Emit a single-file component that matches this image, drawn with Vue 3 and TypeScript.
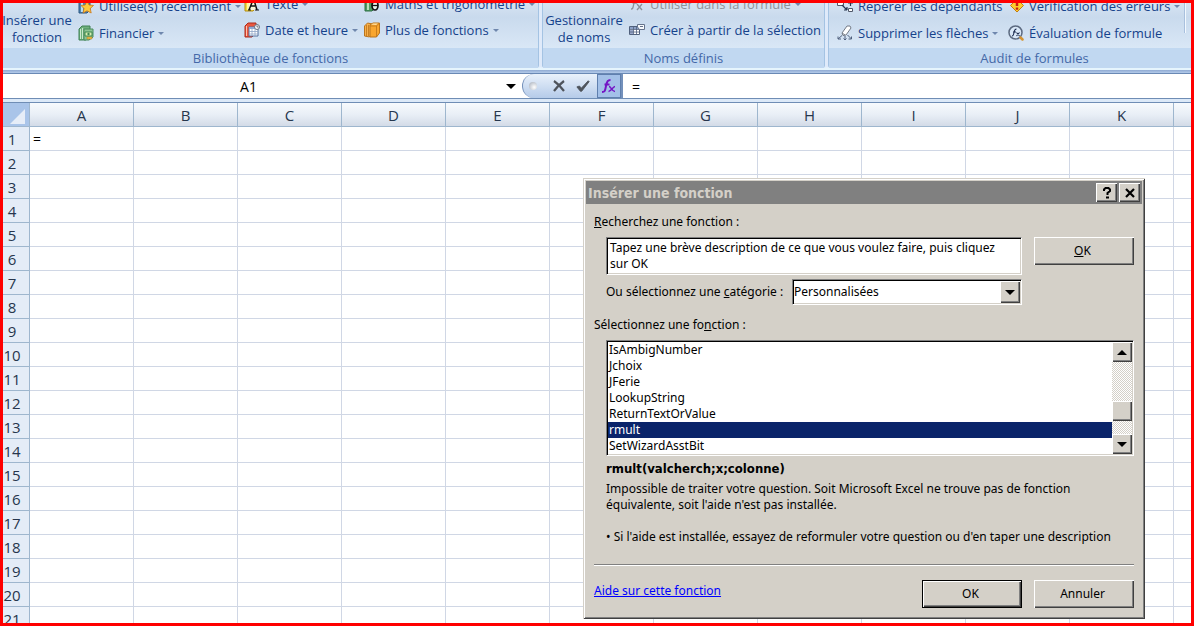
<script setup lang="ts">
import { ref } from 'vue'

interface Command {
  label: string
  icon: string
  menu?: boolean
  disabled?: boolean
}

const library: Command[][] = [
  [
    { label: 'Utilisée(s) récemment', icon: 'recent', menu: true },
    { label: 'Financier', icon: 'finance', menu: true },
  ],
  [
    { label: 'Texte', icon: 'text', menu: true },
    { label: 'Date et heure', icon: 'date', menu: true },
  ],
  [
    { label: 'Maths et trigonométrie', icon: 'maths', menu: true },
    { label: 'Plus de fonctions', icon: 'more', menu: true },
  ],
]
const names: Command[] = [
  { label: 'Utiliser dans la formule', icon: 'use', menu: true, disabled: true },
  { label: 'Créer à partir de la sélection', icon: 'create' },
]
const audit: Command[][] = [
  [
    { label: 'Repérer les dépendants', icon: 'trace' },
    { label: 'Supprimer les flèches', icon: 'erase', menu: true },
  ],
  [
    { label: 'Vérification des erreurs', icon: 'check', menu: true },
    { label: 'Évaluation de formule', icon: 'evaluate' },
  ],
]

const columns = ['A', 'B', 'C', 'D', 'E', 'F', 'G', 'H', 'I', 'J', 'K', '']
const rows = Array.from({ length: 21 }, (_, i) => i + 1)

const cellName = ref('A1')
const formula = ref('=')
const search = ref('Tapez une brève description de ce que vous voulez faire, puis cliquez sur OK')
const category = ref('Personnalisées')
const functions = ['IsAmbigNumber', 'Jchoix', 'JFerie', 'LookupString', 'ReturnTextOrValue', 'rmult', 'SetWizardAsstBit']
const selected = ref('rmult')
</script>

<template>
  <svg class="defs" aria-hidden="true">
    <defs>
      <symbol id="recent" viewBox="0 0 16 16">
        <path d="M1 3l3-2h8v11l-3 3H1z" fill="#4f86b8" stroke="#29557f" />
        <path d="M3 4h2v10H3z" fill="#b9dcf2" />
        <path d="M9 3l2 4 4.500.5-3.300 3 1 4.500L9 12.800 5 15l1-4.500-3-3L7.200 7z" fill="#ffc83c" stroke="#c9761a" stroke-width=".8" />
      </symbol>
      <symbol id="finance" viewBox="0 0 16 16">
        <path d="M1 4l3-3h8v10l-4 4H1z" fill="#6fb07d" stroke="#3f8055" />
        <path d="M2.500 4v10M4.500 3v11" stroke="#c9e8cc" />
        <path d="M6 4h9v8l-4 3H6z" fill="#8cc593" stroke="#4b8c5e" />
        <path d="M7 7h7v4H7z" fill="#d6efb1" stroke="#3c8550" />
        <circle cx="10.500" cy="9" r="1.200" fill="#3c8550" />
        <path d="M9 12h5v2H9z" fill="#efc34d" stroke="#a87a1c" stroke-width=".5" />
      </symbol>
      <symbol id="text" viewBox="0 0 16 16">
        <path d="M1 3l3-2h8v11l-3 3H1z" fill="#f4da3e" stroke="#b38c12" />
        <path d="M3 4h2v10H3z" fill="#fff6a5" />
        <path d="M5 3h8v11H5z" fill="#fff" opacity=".8" />
        <path d="M5 14l4-10h1l3 10M7 10h4" fill="none" stroke="#111" stroke-width="1.500" />
        <path d="M4 14h3M11 14h4" stroke="#111" />
      </symbol>
      <symbol id="date" viewBox="0 0 16 16">
        <path d="M1 4l3-3h8v10l-4 4H1z" fill="#e9573e" stroke="#ab2b1b" />
        <path d="M2.500 4v10" stroke="#ffc2ac" />
        <path d="M5 5h9v9H5z" fill="#fff" stroke="#53719e" />
        <path d="M5 5h9v2H5z" fill="#8eaad4" />
        <path d="M5 9.500h9M5 12h9M8 7v7M11 7v7" stroke="#8fa5c6" stroke-width=".8" />
        <circle cx="13" cy="5" r="2.500" fill="#f4f6fa" stroke="#6c7684" />
        <path d="M13 3.500V5h1.500" stroke="#444" stroke-width=".7" fill="none" />
      </symbol>
      <symbol id="maths" viewBox="0 0 16 16">
        <path d="M1 3l3-2h7v11l-3 3H1z" fill="#4f9b62" stroke="#2c6e43" />
        <path d="M3 4h2v10H3z" fill="#b9e0bd" />
        <ellipse cx="11" cy="9.500" rx="3" ry="4.500" fill="#e8f0ea" stroke="#111" stroke-width="1.700" />
        <path d="M8 9.500h6" stroke="#111" stroke-width="1.300" />
      </symbol>
      <symbol id="more" viewBox="0 0 16 16">
        <path d="M0.500 4l3-3 5 1v9l-3 4-5-1z" fill="#f8b04a" stroke="#b9741c" />
        <path d="M6 3l3-2h6.500v10l-3 4H6z" fill="#f9a62e" stroke="#b9741c" />
        <path d="M6 4h6.500V15M12.500 4l3-3M2.500 3v11M4.500 3v11" stroke="#bd7419" fill="none" stroke-width=".8" />
        <path d="M7 2.500l2-1h5l-2 1.500z" fill="#ffe0a0" />
      </symbol>
      <symbol id="use" viewBox="0 0 16 16">
        <path d="M2 13c2 0 2-1 3-6s1.500-5 3.500-5M3.500 7H8M8 8l5 6M13 8l-5 6" fill="none" stroke="#8c929c" stroke-width="1.300" />
        <path d="M9 5h6" stroke="#8c929c" />
      </symbol>
      <symbol id="create" viewBox="0 0 16 16">
        <path d="M.5 4.500h10v8H.5z" fill="#fff" stroke="#50617d" />
        <path d="M1 5h9v2H1z" fill="#8ba0c6" />
        <path d="M1 8h3v4H1z" fill="#99a8ca" />
        <path d="M0 7.500h11M0 10h11M4.500 4v9M7.500 4v9" stroke="#50617d" stroke-width=".8" />
        <path d="M8.500 2.500h7v5h-5l-2-2.500z" fill="#f8fafc" stroke="#65738c" />
        <path d="M11 4.500h3" stroke="#65738c" />
      </symbol>
      <symbol id="trace" viewBox="0 0 16 16">
        <path d="M.5 3.500h6v4h-6z" fill="#fff" stroke="#50586a" />
        <path d="M5 7l5 5M10 12v-3M10 12H7M13.500 2v6M11 5h5" stroke="#27344e" stroke-width="1.200" fill="none" />
        <path d="M11.500 10.500h4v3h-4z" fill="#fff" stroke="#50586a" />
      </symbol>
      <symbol id="erase" viewBox="0 0 16 16">
        <path d="M5 8l5-7h3l1 2-5 7-3 .5z" fill="#fff" stroke="#747b87" />
        <path d="M5 8l3 2" stroke="#747b87" />
        <path d="M5 10.500l-4 3.500M1 11.500V14h3M8 11v4M6.500 13.500L8 15l1.500-1.500M10.500 10l4 4M14.500 11.500V14h-3" fill="none" stroke="#4e5f7c" />
      </symbol>
      <symbol id="check" viewBox="0 0 16 16">
        <path d="M1 3h6" stroke="#4969b0" stroke-width="3" />
        <path d="M9 1l6.500 6.500L9 14 2.500 7.500z" fill="#ffcb2d" stroke="#c27b12" />
        <path d="M9 3v5" stroke="#c41f12" stroke-width="2.500" />
        <path d="M9 9.500v2.200" stroke="#c41f12" stroke-width="2.500" />
      </symbol>
      <symbol id="evaluate" viewBox="0 0 16 16">
        <circle cx="7.500" cy="7.500" r="6.500" fill="#d9e8f8" stroke="#5c6a80" stroke-width="1.500" />
        <path d="M4 11c1.500 0 1.600-1 2-3.500S7 4 8.500 4M5 7h3M8.500 7.500l3 3.500M11.500 7.500l-3 3.500" fill="none" stroke="#1c2b4e" stroke-width="1.100" />
        <path d="M12.500 12.500l2 2" stroke="#d49434" stroke-width="2.500" stroke-linecap="round" />
      </symbol>
    </defs>
  </svg>

  <div class="window">
    <section class="ribbon" aria-label="Formules">
      <div class="group library">
        <div class="body">
          <button class="big">Insérer une<br />fonction</button>
          <div v-for="(stack, i) in library" :key="i" class="stack" :class="'lib' + i">
            <button v-for="c in stack" :key="c.label" class="cmd">
              <svg class="icon"><use :href="'#' + c.icon" /></svg>{{ c.label }}<i v-if="c.menu" class="caret"></i>
            </button>
          </div>
        </div>
        <div class="caption">Bibliothèque de fonctions</div>
      </div>
      <div class="group names">
        <div class="body">
          <button class="big">Gestionnaire<br />de noms</button>
          <div class="stack">
            <button v-for="c in names" :key="c.label" class="cmd" :disabled="c.disabled">
              <svg class="icon"><use :href="'#' + c.icon" /></svg>{{ c.label }}<i v-if="c.menu" class="caret"></i>
            </button>
          </div>
        </div>
        <div class="caption">Noms définis</div>
      </div>
      <div class="group audit">
        <div class="body">
          <div v-for="(stack, i) in audit" :key="i" class="stack low" :class="'aud' + i">
            <button v-for="c in stack" :key="c.label" class="cmd">
              <svg class="icon"><use :href="'#' + c.icon" /></svg>{{ c.label }}<i v-if="c.menu" class="caret"></i>
            </button>
          </div>
          <div class="divider"></div>
        </div>
        <div class="caption">Audit de formules</div>
      </div>
    </section>

    <div class="formula-bar">
      <input v-model="cellName" class="name-box" aria-label="Zone Nom" />
      <button class="name-drop" aria-label="Liste des noms"><i class="arrow down"></i></button>
      <div class="tools">
        <i class="knob"></i>
        <button class="tool" aria-label="Annuler la saisie">
          <svg viewBox="0 0 14 14"><path d="M2 2c3 2 7 6 10 10M12 2C8 5 5 8 2 12" fill="none" stroke="#4e535b" stroke-width="2.200" /></svg>
        </button>
        <button class="tool" aria-label="Entrer">
          <svg viewBox="0 0 16 14"><path d="M1 8l3-1 2 2.500L14 1l1 1L6.500 13H5z" fill="#4e535b" stroke="#4e535b" /></svg>
        </button>
        <button class="tool fx" aria-label="Insérer une fonction">
          <svg viewBox="0 0 16 16">
            <path d="M1 14c3 0 3-1 4-6s2-6 4.500-6M3.500 6.500H8.500" fill="none" stroke="#7415c4" stroke-width="2" />
            <path d="M8 8.500c2 0 3 5 6 5M14 8.500c-2 0-4 5-6.500 5" fill="none" stroke="#7415c4" stroke-width="1.500" />
          </svg>
        </button>
      </div>
      <input v-model="formula" class="formula" aria-label="Barre de formule" />
    </div>

    <div class="sheet">
      <table>
        <thead>
          <tr>
            <th class="corner"><svg viewBox="0 0 16 16"><path d="M16 0v16H0z" fill="#e6edf8" /></svg></th>
            <th v-for="(c, i) in columns" :key="i" scope="col">{{ c }}</th>
          </tr>
        </thead>
        <tbody>
          <tr v-for="r in rows" :key="r">
            <th scope="row">{{ r }}</th>
            <td v-for="(c, i) in columns" :key="i">{{ r === 1 && i === 0 ? formula : '' }}</td>
          </tr>
        </tbody>
      </table>
    </div>

    <div class="dialog" role="dialog" aria-labelledby="dialog-title">
      <header class="title-bar">
        <h1 id="dialog-title">Insérer une fonction</h1>
        <button class="btn chrome" aria-label="Aide">
          <svg viewBox="0 0 12 12"><path d="M3 4V2.500L4.500 1h3L9 2.500V4L6.500 6v2" fill="none" stroke="#000" stroke-width="2" /><path d="M5 9.500h3v2H5z" /></svg>
        </button>
        <button class="btn chrome" aria-label="Fermer">
          <svg viewBox="0 0 12 12"><path d="M2 2l8 8M10 2l-8 8" stroke="#000" stroke-width="2.200" /></svg>
        </button>
      </header>
      <div class="content">
        <label for="search"><u>R</u>echerchez une fonction :</label>
        <div class="search-row">
          <textarea id="search" v-model="search" class="sunken" rows="2"></textarea>
          <button class="btn"><span><u>O</u>K</span></button>
        </div>
        <div class="category-row">
          <label for="category">Ou sélectionnez une <u>c</u>atégorie :</label>
          <div class="combo sunken">
            <select id="category" v-model="category">
              <option>Personnalisées</option>
            </select>
            <span class="btn combo-arrow"><i class="arrow down"></i></span>
          </div>
        </div>
        <div id="list-label" class="list-label">Sélectionnez une fo<u>n</u>ction :</div>
        <div class="list sunken">
          <ul role="listbox" aria-labelledby="list-label" tabindex="0">
            <li
              v-for="f in functions"
              :key="f"
              role="option"
              :aria-selected="f === selected"
              :class="{ selected: f === selected }"
              @click="selected = f"
            >{{ f }}</li>
          </ul>
          <div class="scrollbar">
            <button class="btn" aria-label="Monter"><i class="arrow up"></i></button>
            <span class="track-before"></span>
            <span class="btn thumb"></span>
            <span class="track-after"></span>
            <button class="btn" aria-label="Descendre"><i class="arrow down"></i></button>
          </div>
        </div>
        <div class="description">
          <h2>rmult(valcherch;x;colonne)</h2>
          <p>Impossible de traiter votre question. Soit Microsoft Excel ne trouve pas de fonction équivalente, soit l'aide n'est pas installée.</p>
          <p class="hint">• Si l'aide est installée, essayez de reformuler votre question ou d'en taper une description</p>
        </div>
        <hr />
        <footer>
          <a href="#aide">Aide sur cette fonction</a>
          <button class="btn default">OK</button>
          <button class="btn">Annuler</button>
        </footer>
      </div>
    </div>
  </div>
</template>

<style>
html,
body {
  margin: 0;
  overflow: hidden;
}
</style>

<style scoped>
* {
  box-sizing: border-box;
}
button,
input,
textarea,
select {
  margin: 0;
  padding: 0;
  border: 0;
  border-radius: 0;
  background: none;
  font: inherit;
  color: inherit;
  outline: 0;
}
.defs {
  position: absolute;
  width: 0;
  height: 0;
}
.window {
  position: relative;
  display: flex;
  flex-direction: column;
  height: 100vh;
  border: 3px solid #f00;
  overflow: hidden;
  background: #fff;
  font-family: 'Open Sans', 'Noto Sans', sans-serif;
  font-size: 13px;
  color: #000;
}

/* Ribbon */
.ribbon {
  display: flex;
  flex: none;
  gap: 3px;
  height: 71px;
  padding-bottom: 6px;
  background: linear-gradient(#dfeafa 64px, #e6f5fd 65px, #e6f5fd 67px, #8faad3 67px, #b4cbea 70px, #6a89b5 70px);
  overflow: hidden;
  color: #15428b;
}
.group {
  display: flex;
  flex: none;
  flex-direction: column;
  border: 1px solid #a4c3e3;
  border-top: 0;
  border-radius: 0 0 3px 3px;
  background: linear-gradient(#d6e3f2, #c9daed 14px, #d9e7f6 45px);
}
.library {
  width: 536px;
  border-left: 0;
}
.names {
  width: 283px;
}
.audit {
  width: 413px;
}
.body {
  display: flex;
  align-items: flex-end;
  height: 45px;
}
.caption {
  flex: 1;
  background: #c1d8f1;
  color: #4468a8;
  line-height: 20px;
  text-align: center;
}
.big {
  flex: none;
  width: 68px;
  margin-bottom: 2px;
  line-height: 17px;
  white-space: nowrap;
  display: flex;
  justify-content: center;
}
.names .big {
  width: 82px;
}
.stack {
  display: flex;
  flex-direction: column;
  align-items: flex-start;
  justify-content: flex-end;
  gap: 2px;
  height: 45px;
  padding-bottom: 6px;
}
.lib0,
.low {
  gap: 3px;
  padding-bottom: 3px;
}
.lib0 {
  width: 166px;
  margin-left: 7px;
}
.lib1 {
  width: 120px;
}
.names .stack {
  margin-left: 4px;
}
.aud0 {
  width: 171px;
  margin-left: 8px;
}
.aud1 {
  width: 168px;
}
.cmd {
  display: flex;
  flex: none;
  align-items: center;
  height: 24px;
  white-space: nowrap;
}
.cmd:disabled {
  color: #8d9299;
}
.icon {
  width: 16px;
  height: 16px;
  margin-right: 5px;
}
.caret {
  margin-left: 4px;
  border: 3px solid transparent;
  border-top-color: #6f87ad;
  border-bottom: 0;
}
.divider {
  align-self: flex-start;
  width: 2px;
  height: 30px;
  margin-left: 8px;
  border-left: 1px solid #a9c0dd;
  background: #f2f8fe;
}

/* Formula bar */
.formula-bar {
  display: flex;
  flex: none;
  height: 29px;
  border-bottom: 1px solid #6f8db5;
  background: linear-gradient(#fff 24px, #6f8db5 24px, #6f8db5 25px, #dce9f8 25px);
}
.name-box {
  width: 491px;
  height: 24px;
  text-align: center;
  font-size: 14px;
}
.name-drop {
  width: 28px;
  height: 24px;
  padding-left: 5px;
  display: flex;
  align-items: center;
  justify-content: center;
}
.tools {
  display: flex;
  align-items: center;
  width: 100px;
  height: 24px;
  border: 1px solid #7390bb;
  border-width: 0 1px 0 1px;
  border-radius: 12px 0 0 12px;
  background: linear-gradient(#e9f1fb, #b5cbe9);
}
.knob {
  width: 8px;
  height: 8px;
  margin: 0 10px 0 6px;
  border-radius: 50%;
  background: radial-gradient(circle at 65% 65%, #fff, #a4acb9);
}
.tool {
  display: flex;
  align-items: center;
  justify-content: center;
  width: 24px;
  height: 24px;
}
.tool svg {
  width: 14px;
  height: 14px;
}
.tool.fx {
  margin-left: 2px;
  border: 1px solid #5f7fae;
  background: #a3c0e8;
}
.tool.fx svg {
  width: 16px;
  height: 16px;
}
.formula {
  flex: 1;
  min-width: 0;
  height: 24px;
  padding-left: 9px;
  border-left: 1px solid #7390bb;
  font-size: 14px;
}

/* Sheet */
.sheet {
  flex: 1;
  min-height: 0;
  overflow: hidden;
}
table {
  width: 1275px;
  table-layout: fixed;
  border-collapse: separate;
  border-spacing: 0;
  font-size: 15px;
}
th,
td {
  width: 104px;
  height: 24px;
  padding: 0;
  border: solid #d0d7e5;
  border-width: 0 1px 1px 0;
  font-weight: 400;
  line-height: 22px;
}
td {
  padding-left: 3px;
  font-size: 14px;
}
th {
  color: #27364d;
}
thead th {
  border-color: #9eb6ce;
  background: linear-gradient(#f7fafd, #e8eef6 12px, #d3dbe7);
}
tbody th,
.corner {
  width: 27px;
}
tbody th {
  padding-right: 8px;
  border-color: #9eb6ce;
  background: #e4ecf7;
}
thead .corner {
  background: #a9c4e9;
  text-align: right;
}
.corner svg {
  display: block;
  width: 15px;
  height: 15px;
  margin: 4px 4px 0 auto;
}

/* Dialog */
.dialog {
  position: absolute;
  top: 175px;
  left: 580px;
  width: 562px;
  padding: 3px;
  background: #d4d0c8;
  box-shadow: inset 1px 1px #d4d0c8, inset -1px -1px #404040, inset 2px 2px #fff, inset -2px -2px #808080;
  font-family: 'Noto Sans', 'DejaVu Sans Condensed', sans-serif;
  font-size: 12px;
  line-height: 16px;
}
.title-bar {
  display: flex;
  align-items: center;
  height: 23px;
  padding: 0 2px;
  background: #808080;
}
h1 {
  flex: 1;
  margin: 0;
  font-family: 'DejaVu Sans Condensed', 'DejaVu Sans', sans-serif;
  font-size: 14px;
  font-weight: 700;
  color: #d4d0c8;
}
.btn {
  display: flex;
  flex: none;
  align-items: center;
  justify-content: center;
  width: 100px;
  height: 28px;
  background: #d4d0c8;
  box-shadow: inset 1px 1px #fff, inset -1px -1px #404040, inset -2px -2px #808080;
}
.search-row .btn,
footer .btn {
  padding-right: 3px;
}
.btn.default {
  border: 1px solid #000;
}
.btn.chrome {
  width: 21px;
  height: 19px;
  margin-left: 2px;
}
.chrome svg {
  width: 12px;
  height: 12px;
}
.arrow {
  border: 5px solid transparent;
}
.arrow.down {
  border-top-color: #000;
  border-bottom: 0;
}
.arrow.up {
  border-bottom-color: #000;
  border-top: 0;
}
.sunken {
  padding: 1px;
  border: 1px solid;
  border-color: #808080 #fff #fff #808080;
  background: #fff;
  box-shadow: inset 1px 1px #000, inset -1px -1px #d4d0c8;
}
.content {
  padding: 10px 8px 8px;
}
.content > label {
  display: block;
}
.search-row {
  display: flex;
  gap: 12px;
  margin: 7px 0 4px 12px;
}
textarea.sunken {
  display: block;
  flex: 1;
  height: 38px;
  padding: 2px 12px 2px 3px;
  resize: none;
  overflow: hidden;
}
.category-row {
  display: flex;
  align-items: center;
  justify-content: space-between;
  margin: 0 112px 12px 12px;
}
.combo {
  display: flex;
  width: 230px;
  height: 26px;
}
select {
  flex: 1;
  appearance: none;
}
.combo-arrow {
  width: 20px;
  height: 22px;
  pointer-events: none;
}
.list {
  display: flex;
  margin: 7px 0 5px 12px;
}
ul {
  flex: 1;
  margin: 0;
  padding: 0;
  list-style: none;
  outline: 0;
}
li {
  height: 16px;
  padding-left: 1px;
  line-height: 16px;
}
.selected {
  background: #0a246a;
  color: #fff;
}
.scrollbar {
  display: flex;
  flex-direction: column;
  width: 20px;
  background: repeating-conic-gradient(#fff 0 25%, #d4d0c8 0 50%) 0 0 / 2px 2px;
}
.scrollbar .btn {
  width: 20px;
  height: 20px;
}
.track-before {
  flex: 3;
}
.track-after {
  flex: 1;
}
.description {
  margin-left: 12px;
}
h2 {
  margin: 0 0 4px;
  font-family: 'DejaVu Sans Condensed', 'DejaVu Sans', sans-serif;
  font-size: 13px;
  line-height: 16px;
}
p {
  margin: 0 12px 0 0;
}
.hint {
  margin: 16px 0 0;
}
hr {
  height: 2px;
  margin: 19px 0 14px;
  border: 0;
  border-top: 1px solid #808080;
  background: #fff;
}
footer {
  display: flex;
  gap: 12px;
}
footer a {
  flex: 1;
  padding-top: 3px;
  color: #00f;
}
</style>
